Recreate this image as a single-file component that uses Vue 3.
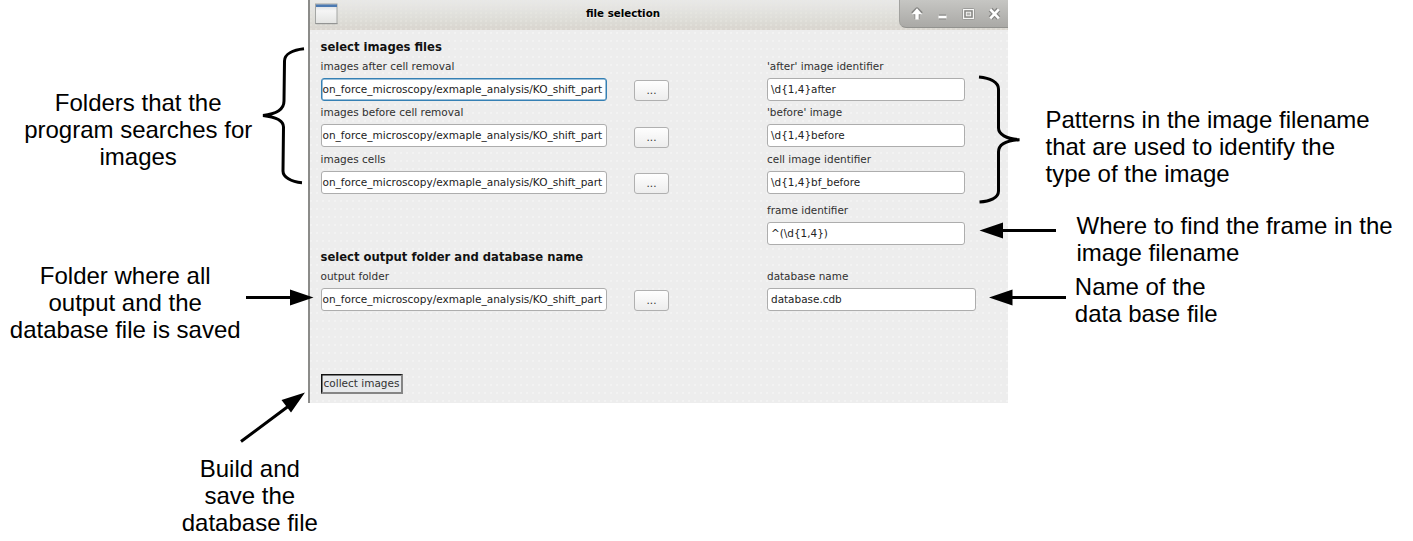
<script setup>
const path = 'on_force_microscopy/exmaple_analysis/KO_shift_part'
const rows = [
  { id: 'after', label: 'images after cell removal', path, focus: true, rightLabel: "'after' image identifier", value: '\\d{1,4}after' },
  { id: 'before', label: 'images before cell removal', path, rightLabel: "'before' image", value: '\\d{1,4}before' },
  { id: 'cells', label: 'images cells', path, rightLabel: 'cell image identifier', value: '\\d{1,4}bf_before' },
  { id: 'frame', rightLabel: 'frame identifier', value: '^(\\d{1,4})' },
]
const output = [
  { id: 'output', label: 'output folder', path, rightLabel: 'database name', value: 'database.cdb', wide: true },
]
const notes = [
  { id: 'n1', lines: ['Folders that the', 'program searches for', 'images'] },
  { id: 'n2', lines: ['Folder where all', 'output and the', 'database file is saved'] },
  { id: 'n3', lines: ['Build and', 'save the', 'database file'] },
  { id: 'n4', lines: ['Patterns in the image filename', 'that are used to identify the', 'type of the image'] },
  { id: 'n5', lines: ['Where to find the frame in the', 'image filename'] },
  { id: 'n6', lines: ['Name of the', 'data base file'] },
]
</script>

<template>
  <main class="figure">
    <section class="window">
      <header class="titlebar">
        <svg class="app-icon" width="24" height="22" viewBox="0 0 24 22">
          <defs>
            <linearGradient id="pane" x1="0" y1="0" x2="0" y2="1">
              <stop offset="0" stop-color="#d2d7dc" />
              <stop offset=".35" stop-color="#f5f5f5" />
              <stop offset="1" stop-color="#e3e4e2" />
            </linearGradient>
          </defs>
          <rect x=".5" y="1" width="21.500" height="19.500" fill="url(#pane)" stroke="#a4a6a4" />
          <rect x="1" y="1.500" width="21" height="2.500" fill="#4b79b2" />
          <path d="M.5 20.700h22" stroke="#8f918f" />
        </svg>
        <h1 class="title"><span>file selection</span></h1>
        <div class="controls">
          <svg width="108" height="28" viewBox="0 0 108 28">
            <g fill="none" stroke="#858583" stroke-width="5" stroke-linejoin="round">
              <path d="M17 19V10.500M13 14l4-4 4 4M39 17h7M64.500 10.500h8v7h-8zM90.500 9.500l8 8.500M98.500 9.500l-8 8.500" />
            </g>
            <path d="M17 8.300l5.300 6H18.700V19.500H15.300V14.300H11.700z" fill="#fff" />
            <rect x="38.500" y="15.700" width="8" height="2.700" fill="#fff" />
            <rect x="63.500" y="9.500" width="10" height="9" fill="none" stroke="#f7f7f6" stroke-width="1.400" />
            <rect x="66.300" y="12.200" width="4.400" height="3.600" fill="#b5b5b2" stroke="#f7f7f6" stroke-width="1" />
            <path d="M90.300 9.300l8.500 9M98.800 9.300l-8.500 9" stroke="#fff" stroke-width="2.600" />
          </svg>
        </div>
      </header>

      <form class="form" @submit.prevent>
        <h2 class="heading"><span>select images files</span></h2>
        <div v-for="r in rows" :key="r.id" class="row" :class="r.id">
          <div class="cell left">
            <template v-if="r.path">
              <span class="label">{{ r.label }}</span>
              <div class="input path" :class="{ focus: r.focus }"><span>{{ r.path }}</span></div>
            </template>
          </div>
          <div class="cell mid"><button v-if="r.path" type="button" class="browse">...</button></div>
          <div class="cell">
            <span class="label">{{ r.rightLabel }}</span>
            <div class="input"><span>{{ r.value }}</span></div>
          </div>
        </div>
        <h2 class="heading second"><span>select output folder and database name</span></h2>
        <div v-for="r in output" :key="r.id" class="row">
          <div class="cell left">
            <span class="label">{{ r.label }}</span>
            <div class="input path"><span>{{ r.path }}</span></div>
          </div>
          <div class="cell mid"><button type="button" class="browse">...</button></div>
          <div class="cell">
            <span class="label">{{ r.rightLabel }}</span>
            <div class="input wide"><span>{{ r.value }}</span></div>
          </div>
        </div>
        <button type="button" class="collect">collect images</button>
      </form>
    </section>

    <p v-for="n in notes" :key="n.id" class="note" :class="n.id">
      <span v-for="l in n.lines" :key="l">{{ l }}</span>
    </p>

    <svg class="marks" width="1413" height="541" viewBox="0 0 1413 541">
      <g fill="none" stroke="#000" stroke-width="3">
        <path d="M304 48.800C293 50 284.500 54 284.500 61L284 101C284 109 276 114 263 115.500C276 117 283.500 120 283.500 127L283 171C283 177 291 182 302 182.800" />
        <path d="M979 77C990 78 998.500 82 998.500 89V128C998.500 134 1006 139 1019.500 139.700C1006 140.500 998.500 145 998.500 152V191C998.500 198 990 201.500 979.500 202" />
        <path d="M246 297.500H292M1002 230.500H1056M1010 297.500H1066M241 441.500L288 406.500" />
      </g>
      <path d="M313.500 297.500L290 289.500V305.500zM979.500 230.500L1003 222.500V238.500zM989 297.500L1012.500 289.500V305.500zM305 392.500L281.500 400L291 412.500z" />
    </svg>
  </main>
</template>

<style>
body { background: #fff; }
</style>

<style scoped>
* { box-sizing: border-box; }
.figure { position: relative; width: 1413px; height: 541px; overflow: hidden; background: #fff; }
.window {
  width: 700px; height: 403px; margin-left: 308px;
  border-left: 2px solid #8b8b89;
  background-color: #ededed;
  background-image: radial-gradient(circle at 1px 1px, #fafafa 0.4px, transparent 0.9px);
  background-size: 6px 8px;
  font-family: "DejaVu Sans", sans-serif; font-size: 10.45px; color: #303030;
}
.titlebar {
  display: flex; height: 30px; align-items: flex-start;
  background: radial-gradient(circle at 1px 1px, #e9e8e2 0.4px, transparent 0.9px) 0 0 / 5px 4px, linear-gradient(#e9e9e8, #dcdbd5 75%, #d9d5cf);
}
.app-icon { margin: 3px 0 0 5px; flex: none; }
.title { flex: 1; margin: 0; font-size: 10.25px; line-height: 14px; padding: 6px 0 0 247px; color: #000; white-space: nowrap; text-shadow: 0 1px 0 #f2f2f0; }
.controls { width: 109px; height: 28px; border-radius: 0 0 0 7px; background: linear-gradient(#c6c6c3, #aaa9a6); border-left: 1px solid #a2a29f; border-bottom: 1px solid #92928f; }
.controls svg { display: block; margin-left: -.5px; }
.form { padding: 10px 0 0 10.5px; }
.heading { margin: 0; height: 14px; line-height: 14px; font-size: 11.6px; color: #111; white-space: nowrap; }
.row { display: grid; grid-template-columns: 286px 28px 35px 97.500px 209px; height: 46.400px; }
.cell { padding-top: 5px; grid-column: 5; }
.cell.left { grid-column: 1; }
.cell.mid { grid-column: 3; padding-top: 26px; margin-left: -.5px; }
.row.before .mid { padding-top: 26.500px; }
.row.frame { margin-top: 4.700px; }
.label { display: block; height: 14px; line-height: 14px; margin-bottom: 5px; white-space: nowrap; }
.input {
  width: 198px; height: 23px; line-height: 20px; border: 1px solid #adadad; border-radius: 3px;
  background: #fff; padding-left: 3px; white-space: pre; overflow: hidden; color: #222;
}
.left .label { font-size: 10.5px; }
.input.path { width: 286px; padding-left: 1px; font-size: 10.53px; }
.input.wide { width: 209px; }
.input.focus { border-color: #3580b4; box-shadow: inset 0 0 0 .5px #3580b4; }
.browse {
  display: block; width: 35px; height: 21px; padding: 0 0 1px; border: 1px solid #b0b0b0; border-radius: 3px;
  background: linear-gradient(#fefefe, #ededed); font: 10.4px "DejaVu Sans", sans-serif; color: #333;
}
.heading.second { margin-top: 5.700px; }
.collect {
  display: block; margin: 63.600px 0 0 .5px; width: 82px; height: 20px; padding: 0; white-space: nowrap;
  border: 1px solid; border-color: #111 #858585 #858585 #111; border-right-width: 2px; border-bottom-width: 2px;
  box-shadow: inset .5px .5px 0 #111;
  background: #e7e9eb; font: 10.5px "DejaVu Sans", sans-serif; color: #333;
}
.note { position: absolute; margin: 0; font: 24px/27px "Liberation Sans", Arial, sans-serif; color: #000; white-space: nowrap; }
.note span { display: block; }
.n1, .n2, .n3 { text-align: center; transform: translateX(-50%); }
.n1 { left: 138.200px; top: 89px; }
.n2 { left: 125.200px; top: 262px; }
.n3 { left: 249.800px; top: 455px; }
.n4 { left: 1045.500px; top: 106px; }
.n5 { left: 1076.500px; top: 212px; }
.n6 { left: 1074.800px; top: 273px; }
.marks { position: absolute; left: 0; top: 0; }
</style>
